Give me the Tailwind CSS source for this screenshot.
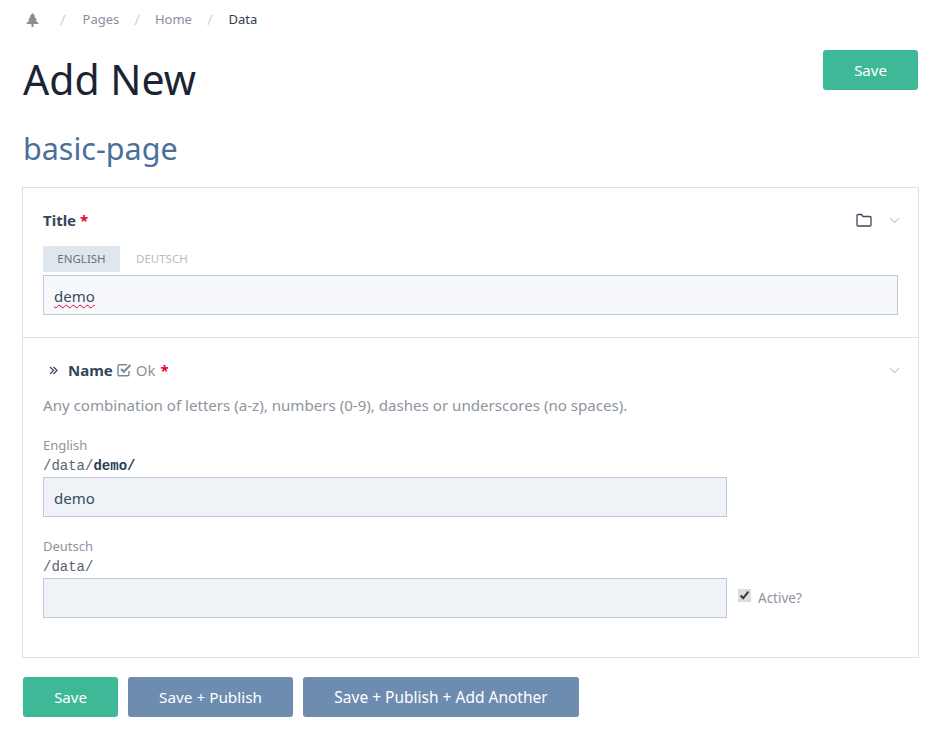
<!DOCTYPE html>
<html lang="en">
<head>
  <meta charset="UTF-8" />
  <title>Add New</title>
  <script src="https://cdn.jsdelivr.net/npm/@tailwindcss/browser@4"></script>
</head>
<body class="bg-white text-[#1f2d3d] font-['Noto_Sans',sans-serif] h-[730px] overflow-hidden">
  <div class="w-[946px] pl-[22px] pr-[28px]">
    <!-- breadcrumb -->
    <nav class="h-[38px] pl-[4px] pt-px flex items-center text-[13px] text-[#8d8d9b]">
      <svg class="w-[13px] h-[14px] text-[#868e96]" viewBox="0 0 13 14" fill="currentColor"><path d="M6.500 0 9.500 3.500H8.300L11 7H9.400L13 11H7.500V14H5.500V11H0L3.600 7H2L4.700 3.500H3.500Z"/></svg>
      <span class="ml-[21px] text-[#ccd3de] text-[15px]">/</span>
      <span class="ml-[17px]">Pages</span>
      <span class="ml-[15px] text-[#ccd3de] text-[15px]">/</span>
      <span class="ml-[15px]">Home</span>
      <span class="ml-[15px] text-[#ccd3de] text-[15px]">/</span>
      <span class="ml-[16px] text-[#2f3d4f]">Data</span>
    </nav>

    <div class="flex justify-between items-start pl-px">
      <h1 class="text-[41px] leading-[60px] mt-[11px] text-[#1a2433]">Add New</h1>
      <button class="mt-[12px] w-[95px] h-[40px] rounded-[3px] bg-[#3eb998] text-white text-[15px]">Save</button>
    </div>
    <h2 class="text-[30.500px] leading-[44px] mt-[17px] pl-px text-[#4a6f9b]">basic-page</h2>

    <!-- form panel -->
    <div class="mt-[17px] w-[897px] h-[471px] border border-[#d9e2ec]">
      <section class="h-[150px] border-b border-[#d9e2ec] px-[20px] pt-[20px]">
        <div class="flex items-center h-[24px]">
          <span class="text-[15px] font-bold text-[#34465a]">Title</span>
          <span class="ml-[4px] text-[15px] font-bold text-[#e8002d]">*</span>
          <svg class="ml-auto w-[16px] h-[14px] text-[#3b4a5e]" viewBox="0 0 16 14" fill="none" stroke="currentColor" stroke-width="1.300"><path d="M1 12V2.500A1 1 0 0 1 2 1.500H5.500L7 3.500H14A1 1 0 0 1 15 4.500V12A1 1 0 0 1 14 13H2A1 1 0 0 1 1 12Z"/></svg>
          <svg class="ml-[17px] mr-[-2px] w-[11px] h-[7px] text-[#ccd3de]" viewBox="0 0 11 7" fill="none" stroke="currentColor" stroke-width="1.500"><path d="M1 1 5.500 5.500 10 1"/></svg>
        </div>
        <div class="flex mt-[14px] text-[11.500px] h-[26px] leading-[26px]">
          <span class="w-[77px] text-center bg-[#dfe6ee] text-[#66727f]">ENGLISH</span>
          <span class="ml-[16px] text-[#b4bcc7]">DEUTSCH</span>
        </div>
        <div class="mt-[3px] h-[40px] w-[855px] border border-[#bccadb] bg-[#f6f8fb] pl-[10px] text-[15px] leading-[40px] text-[#3a4a5d]"><span class="underline decoration-wavy decoration-[#e8002d] decoration-1 underline-offset-2">demo</span></div>
      </section>

      <section class="px-[20px] pt-[20px]">
        <div class="flex items-center h-[24px]">
          <svg class="ml-[6px] w-[9px] h-[9px] text-[#3b4a5e]" viewBox="0 0 9 9" fill="none" stroke="currentColor" stroke-width="1.300"><path d="M1 1 4.500 4.500 1 8M4.500 1 8 4.500 4.500 8"/></svg>
          <span class="ml-[10px] text-[15px] font-bold text-[#34465a]">Name</span>
          <svg class="ml-[4px] w-[15px] h-[14px] text-[#7b8794]" viewBox="0 0 15 14" fill="none" stroke="currentColor" stroke-width="1.400"><path d="M12 8V11.500A1.300 1.300 0 0 1 10.700 12.800H2.300A1.300 1.300 0 0 1 1 11.500V3A1.300 1.300 0 0 1 2.300 1.700H10"/><path stroke-width="2" d="M4 6 6.800 8.800 13.500 2"/></svg>
          <span class="ml-[4px] text-[15px] text-[#8d949e]">Ok</span>
          <span class="ml-[5px] text-[15px] font-bold text-[#e8002d]">*</span>
          <svg class="ml-auto mr-[-2px] w-[11px] h-[7px] text-[#ccd3de]" viewBox="0 0 11 7" fill="none" stroke="currentColor" stroke-width="1.500"><path d="M1 1 5.500 5.500 10 1"/></svg>
        </div>
        <p class="mt-[12px] text-[15.100px] leading-[22px] text-[#8d949e]">Any combination of letters (a-z), numbers (0-9), dashes or underscores (no spaces).</p>

        <div class="mt-[19px] text-[13px] leading-[20px] text-[#8d949e]">English</div>
        <div class="pt-px text-[14px] leading-[20px] font-['Liberation_Mono',monospace] text-[#59646f]">/data/<span class="font-bold text-[#2f3f52]">demo/</span></div>
        <div class="mt-px w-[684px] h-[40px] border border-[#bccadb] bg-[#eff3f8] pl-[10px] text-[15px] leading-[40px] text-[#3a4a5d]">demo</div>

        <div class="mt-[19px] text-[13px] leading-[20px] text-[#8d949e]">Deutsch</div>
        <div class="pt-px text-[14px] leading-[20px] font-['Liberation_Mono',monospace] text-[#59646f]">/data/</div>
        <div class="mt-px flex items-center">
          <div class="w-[684px] h-[40px] border border-[#bccadb] bg-[#eff3f8]"></div>
          <input type="checkbox" checked class="ml-[11px] mb-[6px] w-[13px] h-[13px] accent-[#dddddd]" />
          <span class="ml-[7px] text-[13.500px] text-[#8d949e]">Active?</span>
        </div>
      </section>
    </div>

    <div class="mt-[19px] pl-px flex gap-[10px] text-white">
      <button class="w-[95px] h-[40px] rounded-[3px] bg-[#3eb998] text-[15px]">Save</button>
      <button class="w-[165px] h-[40px] rounded-[3px] bg-[#6d8cb0] text-[15.300px]">Save + Publish</button>
      <button class="w-[276px] h-[40px] pt-px rounded-[3px] bg-[#6d8cb0] text-[15.500px]">Save + Publish + Add Another</button>
    </div>
  </div>
</body>
</html>
